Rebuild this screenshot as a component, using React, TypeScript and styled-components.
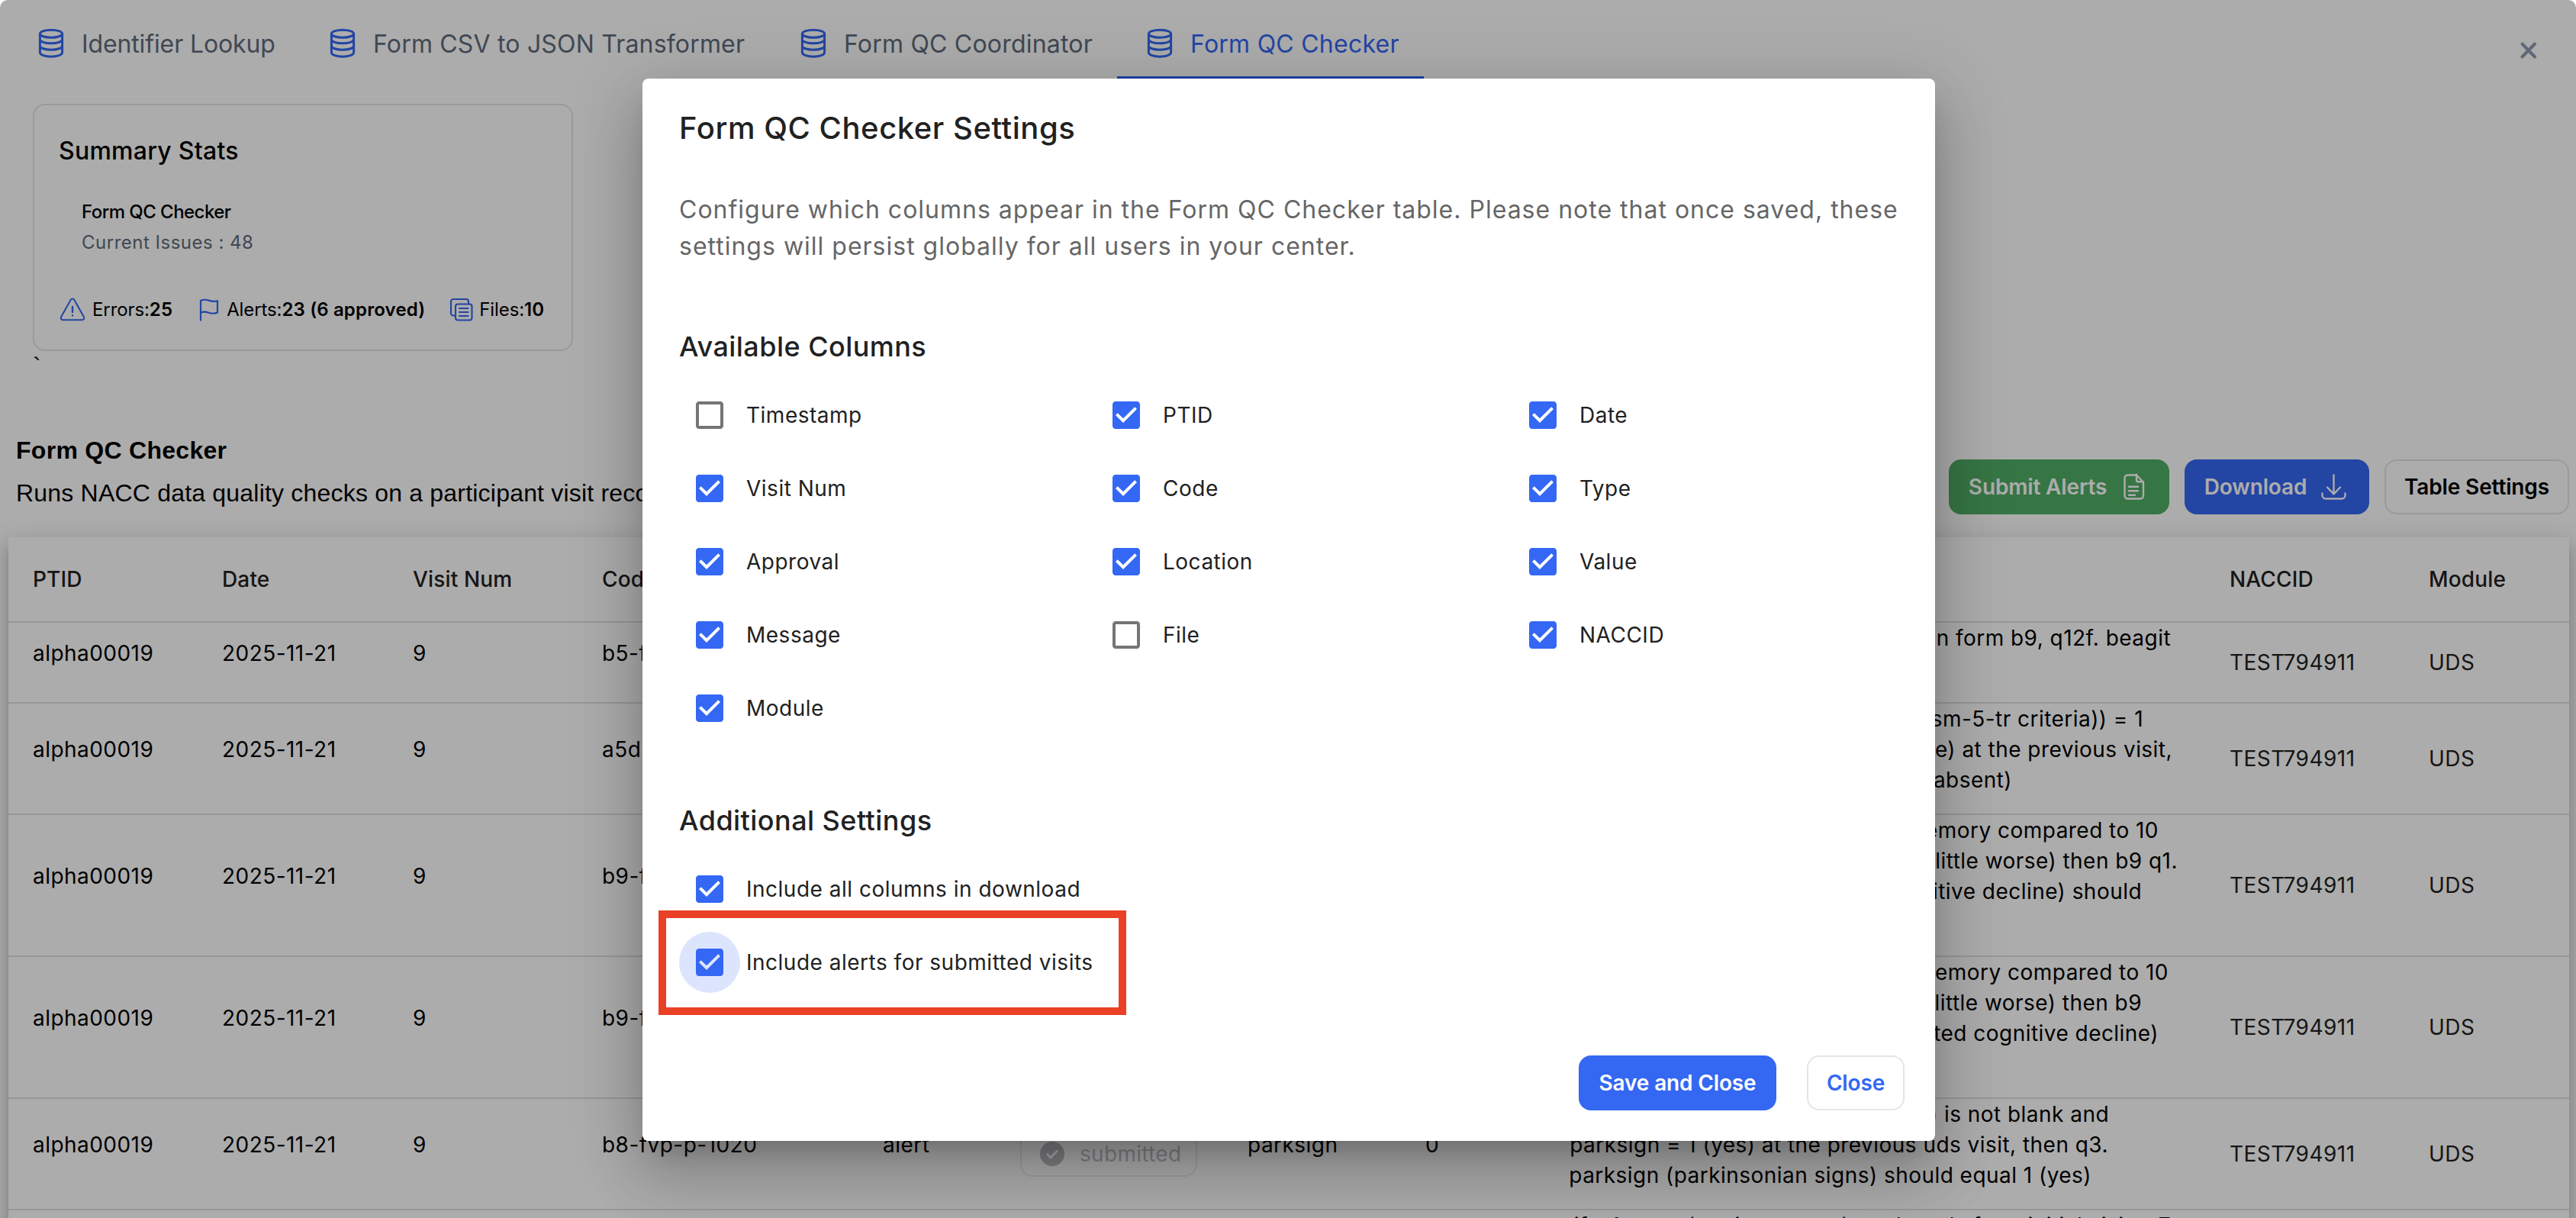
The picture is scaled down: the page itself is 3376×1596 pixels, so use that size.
import React from "react";
import styled, { createGlobalStyle } from "styled-components";

const GlobalStyle = createGlobalStyle`
  * { box-sizing: border-box; }
  body {
    margin: 0;
    background: #fff;
    font-family: Inter, "Liberation Sans", sans-serif;
    color: #000;
  }
`;

const Page = styled.div`
  position: relative;
  width: 3376px;
  height: 1596px;
  overflow: hidden;
  background: #fff;
`;

const TabBar = styled.nav`
  display: flex;
  height: 104px;
  padding-left: 11px;
`;

const Tab = styled.div<{ $width: number; $spacing: number; $active?: boolean }>`
  display: flex;
  align-items: center;
  gap: 16px;
  width: ${(p) => p.$width}px;
  padding: 14px 0 0 32px;
  border-bottom: 4px solid ${(p) => (p.$active ? "#2f62f2" : "transparent")};
  color: ${(p) => (p.$active ? "#3467f4" : "#5f6b7b")};
  font-size: 32px;
  letter-spacing: ${(p) => p.$spacing}px;
  white-space: nowrap;
`;

const CloseMark = styled.div`
  margin: 42px 38px 0 auto;
  height: 48px;
`;

const Summary = styled.section`
  padding: 32px 0 0 43px;
  height: 462px;
`;

const Card = styled.div`
  width: 708px;
  height: 324px;
  padding: 36px 32px 0;
  border: 2px solid #e4e4e9;
  border-radius: 16px;
`;

const CardTitle = styled.h3`
  margin: 0 0 36px;
  font-size: 32px;
  line-height: 48px;
  font-weight: 500;
  letter-spacing: 0.25px;
`;

const CardLine = styled.p<{ $muted?: boolean }>`
  margin: 0 0 0 30px;
  font-size: 24px;
  line-height: 40px;
  font-weight: ${(p) => (p.$muted ? 400 : 500)};
  letter-spacing: ${(p) => (p.$muted ? "0.5px" : "-0.55px")};
  color: ${(p) => (p.$muted ? "#5f6b7b" : "#000")};
`;

const StatRow = styled.div`
  display: flex;
  gap: 31px;
  margin-top: 51px;
`;

const Stat = styled.div`
  display: flex;
  align-items: center;
  height: 32px;
  gap: 8px;
  font-size: 24px;
  font-weight: 400;
  letter-spacing: -0.1px;
  white-space: nowrap;
  svg { flex: none; }
  b { font-weight: 600; letter-spacing: 0.15px; }
`;

const Stray = styled.div`
  height: 40px;
  margin-top: -4px;
  font: 32px/48px "Liberation Sans", sans-serif;
`;

const SectionHead = styled.header`
  display: flex;
  justify-content: space-between;
  align-items: flex-end;
  height: 108px;
  padding: 0 9px 0 21px;
`;

const Intro = styled.div`
  font: 32px/48px "Liberation Sans", Arial, sans-serif;
  letter-spacing: 0.2px;
  h2 {
    margin: 0 0 8px;
    font-size: 32px;
    line-height: 48px;
    font-weight: 700;
    letter-spacing: 0.28px;
  }
  p { margin: 0 0 4px; }
`;

const Actions = styled.div`
  display: flex;
  gap: 20px;
`;

const Button = styled.button<{ $tone: "green" | "blue" | "plain" | "link"; $width: number }>`
  display: flex;
  align-items: center;
  justify-content: center;
  gap: 16px;
  width: ${(p) => p.$width}px;
  height: 72px;
  padding: 0;
  border-radius: 16px;
  border: ${(p) => (p.$tone === "plain" || p.$tone === "link" ? "2px solid #e4e4ea" : "0")};
  background: ${(p) => (p.$tone === "green" ? "#50ae66" : p.$tone === "blue" ? "#3467f2" : "transparent")};
  color: ${(p) => (p.$tone === "plain" ? "#000" : p.$tone === "link" ? "#3467f2" : "#fff")};
  font: 600 28px/40px Inter, sans-serif;
  letter-spacing: -0.15px;
  white-space: nowrap;
`;

const Table = styled.div`
  margin: 30px 9px 0 11px;
  height: 1000px;
  background: #fff;
  box-shadow: 0 10px 10px -6px rgba(0, 0, 0, 0.2), 0 16px 20px 2px rgba(0, 0, 0, 0.14),
    0 6px 28px 4px rgba(0, 0, 0, 0.12);
`;

const Row = styled.div<{ $height: number; $head?: boolean }>`
  display: grid;
  grid-template-columns: 248px 250px 248px 368px 180px 298px 233px 189px 865px 261px 1fr;
  height: ${(p) => p.$height}px;
  padding-left: 32px;
  border-bottom: 2px solid #e0e0e0;
  align-items: center;
  font-size: 28px;
  line-height: 40px;
  font-weight: ${(p) => (p.$head ? 500 : 400)};
  color: ${(p) => (p.$head ? "#212121" : "#000")};
  letter-spacing: ${(p) => (p.$head ? 0.15 : 0.46)}px;
  white-space: nowrap;
`;

const Cell = styled.div`
  padding-bottom: 24px;
`;

const PlainCell = styled.div`
  color: #212121;
`;

const Message = styled.div`
  align-self: start;
  grid-column: 9;
`;

const Line = styled.div<{ $width: number }>`
  display: flex;
  justify-content: flex-end;
  width: ${(p) => p.$width}px;
  height: 40px;
`;

const Chip = styled.div`
  display: flex;
  align-items: center;
  gap: 20px;
  width: 232px;
  height: 60px;
  padding-left: 24px;
  border: 2px solid #ececf0;
  border-radius: 16px;
  color: #c0c0c6;
  letter-spacing: 0.3px;
`;

const Overlay = styled.div`
  position: absolute;
  inset: 0;
  display: flex;
  justify-content: center;
  align-items: flex-start;
  padding: 103px 0 0 2px;
  border-radius: 10px 10px 0 0;
  background: rgba(0, 0, 0, 0.325);
`;

const Dialog = styled.div`
  width: 1694px;
  height: 1392px;
  padding: 33px 40px 40px 48px;
  border-radius: 8px;
  background: #fff;
  color: #212121;
  box-shadow: 0 22px 30px -14px rgba(0, 0, 0, 0.2), 0 48px 76px 6px rgba(0, 0, 0, 0.14),
    0 18px 92px 16px rgba(0, 0, 0, 0.12);
`;

const DialogTitle = styled.h2`
  margin: 0 0 51px;
  font-size: 40px;
  line-height: 64px;
  font-weight: 500;
  letter-spacing: 0.55px;
`;

const DialogText = styled.p`
  margin: 0;
  font-size: 32px;
  line-height: 48px;
  letter-spacing: 1px;
  color: #666;
  white-space: nowrap;
`;

const GroupTitle = styled.h3<{ $top: number }>`
  margin: ${(p) => p.$top}px 0 22px;
  font-size: 36px;
  line-height: 56px;
  font-weight: 500;
  letter-spacing: 0.45px;
`;

const Options = styled.div<{ $columns: number }>`
  display: grid;
  grid-template-columns: repeat(${(p) => p.$columns}, 546px);
  row-gap: 16px;
`;

const Option = styled.label`
  position: relative;
  display: flex;
  align-items: center;
  gap: 8px;
  height: 80px;
  font-size: 28px;
  letter-spacing: 0.5px;
  white-space: nowrap;
`;

const BoxHalo = styled.span<{ $on?: boolean }>`
  display: flex;
  padding: 16px;
  border-radius: 50%;
  background: ${(p) => (p.$on ? "#dde5fe" : "transparent")};
`;

const Highlight = styled.span`
  position: absolute;
  left: -27px;
  top: -28px;
  width: 613px;
  height: 137px;
  border: 10px solid #ea4025;
`;

const Footer = styled.div`
  display: flex;
  justify-content: flex-end;
  gap: 40px;
  margin-top: 82px;
`;

const DatabaseIcon = () => (
  <svg width="48" height="48" viewBox="0 0 24 24" fill="none" stroke="#3467f2" strokeWidth="1.5">
    <ellipse cx="12" cy="5.6" rx="7.3" ry="2.5" />
    <path d="M4.7 5.6V17.9c0 1.5 3.2 2.7 7.3 2.7s7.3-1.2 7.3-2.7V5.6" />
    <path d="M4.7 9.4c0 1.4 3.2 2.5 7.3 2.5s7.3-1.1 7.3-2.5M4.7 13.6c0 1.4 3.2 2.5 7.3 2.5s7.3-1.1 7.3-2.5" />
  </svg>
);

const WarningIcon = () => (
  <svg width="36" height="32" viewBox="0 0 36 32" fill="none" stroke="#3467f2" strokeWidth="2" strokeLinecap="round">
    <path d="M15.6 3.9 3.1 26.2c-1 1.9.2 4 2.3 4h25.2c2.1 0 3.3-2.1 2.3-4L20.4 3.9c-1.1-1.9-3.7-1.9-4.8 0Z" />
    <path d="M18 13v7M18 24.2v.2" strokeWidth="2.4" />
  </svg>
);

const FlagIcon = () => (
  <svg width="32" height="32" viewBox="0 0 32 32" fill="none" stroke="#3467f2" strokeWidth="2.2" strokeLinejoin="round">
    <path d="M6 31.500V5c3.400-1.600 6.600-1.700 10.500-.4 4 1.500 7.500 1.800 11.500.6V20.500c-4 1.900-7.500 1.600-11.500.2-3.900-1.400-7.100-1.400-10.500 0" />
  </svg>
);

const FilesIcon = () => (
  <svg width="32" height="32" viewBox="0 0 32 32" fill="none" stroke="#3467f2" strokeWidth="2.1" strokeLinecap="round">
    <rect x="9" y="9.500" width="21.500" height="21" rx="3" />
    <path d="M8.500 24.500H6a3 3 0 0 1-3-3V6a3 3 0 0 1 3-3h17a3 3 0 0 1 3 3v3" />
    <path d="M14 15h11.500M14 20h11.500M14 25h11.500" />
  </svg>
);

const DocumentIcon = () => (
  <svg width="40" height="40" viewBox="0 0 40 40" fill="none" stroke="#fff" strokeWidth="2.4" strokeLinecap="round" strokeLinejoin="round">
    <path d="M11.500 4.500H23l9 9.500v17.500a4 4 0 0 1-4 4H11.500a4 4 0 0 1-4-4v-23a4 4 0 0 1 4-4Z" />
    <path d="M23 4.500V12a2 2 0 0 0 2 2h7M13 20.500h12M13 26h12M13 31.500h8" transform="translate(0 -.8)" />
  </svg>
);

const DownloadIcon = () => (
  <svg width="40" height="40" viewBox="0 0 40 40" fill="none" stroke="#fff" strokeWidth="2.400" strokeLinecap="round" strokeLinejoin="round">
    <path d="M19.500 4.500V29M11 20.500l8.500 8.800L28 20.500M4.500 28.500V31a4.500 4.500 0 0 0 4.500 4.500h21a4.500 4.500 0 0 0 4.500-4.500v-2.500" />
  </svg>
);

const CloseIcon = () => (
  <svg width="48" height="48" viewBox="0 0 48 48" stroke="#8c9bb0" strokeWidth="4" strokeLinecap="round">
    <path d="m15.500 15.500 16.500 17M32 15.500l-16.500 17" />
  </svg>
);

const CheckboxIcon = ({ checked }: { checked: boolean }) => (
  <svg width="48" height="48" viewBox="0 0 24 24">
    {checked ? (
      <path
        fill="#3467f4"
        d="M19 3H5c-1.110 0-2 .9-2 2v14c0 1.100.89 2 2 2h14c1.110 0 2-.9 2-2V5c0-1.100-.89-2-2-2zm-9 14l-5-5 1.410-1.410L10 14.170l7.590-7.590L19 8l-9 9z"
      />
    ) : (
      <path
        fill="#757575"
        d="M19 5v14H5V5h14m0-2H5c-1.100 0-2 .9-2 2v14c0 1.100.9 2 2 2h14c1.100 0 2-.9 2-2V5c0-1.100-.9-2-2-2z"
      />
    )}
  </svg>
);

const SubmittedIcon = () => (
  <svg width="32" height="32" viewBox="0 0 32 32">
    <circle cx="16" cy="16" r="16" fill="#bdbdc2" />
    <path d="m9.500 16.500 4.500 4.500 8.500-9" fill="none" stroke="#fff" strokeWidth="2.600" strokeLinecap="round" strokeLinejoin="round" />
  </svg>
);

const tabs = [
  { label: "Identifier Lookup", width: 382, spacing: -0.12 },
  { label: "Form CSV to JSON Transformer", width: 617, spacing: 0.18 },
  { label: "Form QC Coordinator", width: 454, spacing: 0.2 },
  { label: "Form QC Checker", width: 402, spacing: 0.25, active: true },
];

type Visit = { height: number; code: string; location: string; lines: [string, number][] };

const visits: Visit[] = [
  {
    height: 106,
    code: "b5-fvp-p-1012",
    location: "beagit",
    lines: [
      ["if present, it should be reported in form b9, q12f. beagit", 788],
      ["should equal 1 (yes)", 280],
    ],
  },
  {
    height: 146,
    code: "a5d2-fvp-p-1008",
    location: "ptsd",
    lines: [
      ["if ptsd (stress disorder (dsm-5-tr criteria)) = 1", 752],
      ["(present) or 2 (remote/inactive) at the previous visit,", 790],
      ["then q6b. should not equal 0 (absent)", 580],
    ],
  },
  {
    height: 186,
    code: "b9-fvp-p-1001",
    location: "decsub",
    lines: [
      ["if participant reports a decline in memory compared to 10", 772],
      ["years ago and it is 1 (yes, a little worse) then b9 q1.", 797],
      ["decsub (self-reported cognitive decline) should", 750],
      ["equal 1 (yes)", 180],
    ],
  },
  {
    height: 186,
    code: "b9-fvp-p-1002",
    location: "decin",
    lines: [
      ["if informant reports decline in memory compared to 10", 785],
      ["years ago and it is 1 (yes, a little worse) then b9", 750],
      ["q2. decin (informant reported cognitive decline)", 772],
      ["should equal 1 (yes)", 280],
    ],
  },
  {
    height: 146,
    code: "b8-fvp-p-1020",
    location: "parksign",
    lines: [
      ["if q3. parksign (parkinsonian signs) is not blank and", 707],
      ["parksign = 1 (yes) at the previous uds visit, then q3.", 706],
      ["parksign (parkinsonian signs) should equal 1 (yes)", 684],
    ],
  },
];

const nextMessage = "if q4. restt (resting tremor) on the uds form initial visit = 7";

const columns: [string, boolean][] = [
  ["Timestamp", false],
  ["PTID", true],
  ["Date", true],
  ["Visit Num", true],
  ["Code", true],
  ["Type", true],
  ["Approval", true],
  ["Location", true],
  ["Value", true],
  ["Message", true],
  ["File", false],
  ["NACCID", true],
  ["Module", true],
];

const headers = ["PTID", "Date", "Visit Num", "Code", "Type", "Approval", "Location", "Value", "Message", "NACCID", "Module"];

export default function App() {
  return (
    <Page>
      <GlobalStyle />
      <TabBar>
        {tabs.map((t) => (
          <Tab key={t.label} $width={t.width} $spacing={t.spacing} $active={t.active}>
            <DatabaseIcon />
            {t.label}
          </Tab>
        ))}
        <CloseMark>
          <CloseIcon />
        </CloseMark>
      </TabBar>

      <Summary>
        <Card>
          <CardTitle>Summary Stats</CardTitle>
          <CardLine>Form QC Checker</CardLine>
          <CardLine $muted>Current Issues : 48</CardLine>
          <StatRow>
            <Stat>
              <WarningIcon />
              <span>Errors:<b>25</b></span>
            </Stat>
            <Stat>
              <FlagIcon />
              <span>Alerts:<b>23 (6 approved)</b></span>
            </Stat>
            <Stat>
              <FilesIcon />
              <span>Files:<b>10</b></span>
            </Stat>
          </StatRow>
        </Card>
        <Stray>`</Stray>
      </Summary>

      <SectionHead>
        <Intro>
          <h2>Form QC Checker</h2>
          <p>Runs NACC data quality checks on a participant visit record.</p>
        </Intro>
        <Actions>
          <Button $tone="green" $width={289}>
            Submit Alerts
            <DocumentIcon />
          </Button>
          <Button $tone="blue" $width={242}>
            Download
            <DownloadIcon />
          </Button>
          <Button $tone="plain" $width={242}>Table Settings</Button>
        </Actions>
      </SectionHead>

      <Table>
        <Row $height={112} $head>
          {headers.map((h) => (
            <div key={h}>{h}</div>
          ))}
        </Row>
        {visits.map((v) => (
          <Row key={v.code} $height={v.height}>
            <Cell>alpha00019</Cell>
            <Cell>2025-11-21</Cell>
            <Cell>9</Cell>
            <Cell>{v.code}</Cell>
            <Cell>alert</Cell>
            <Chip>
              <SubmittedIcon />
              submitted
            </Chip>
            <Cell>{v.location}</Cell>
            <Cell>0</Cell>
            <Message>
              {v.lines.map(([text, width]) => (
                <Line key={text} $width={width}>{text}</Line>
              ))}
            </Message>
            <PlainCell>TEST794911</PlainCell>
            <PlainCell>UDS</PlainCell>
          </Row>
        ))}
        <Row $height={146}>
          <Message>
            <Line $width={788}>{nextMessage}</Line>
          </Message>
        </Row>
      </Table>

      <Overlay>
        <Dialog>
          <DialogTitle>Form QC Checker Settings</DialogTitle>
          <DialogText>
            Configure which columns appear in the Form QC Checker table. Please note that once saved, these
            <br />
            settings will persist globally for all users in your center.
          </DialogText>
          <GroupTitle $top={79}>Available Columns</GroupTitle>
          <Options $columns={3}>
            {columns.map(([label, checked]) => (
              <Option key={label}>
                <BoxHalo>
                  <CheckboxIcon checked={checked} />
                </BoxHalo>
                {label}
              </Option>
            ))}
          </Options>
          <GroupTitle $top={79}>Additional Settings</GroupTitle>
          <Options $columns={1}>
            <Option>
              <BoxHalo>
                <CheckboxIcon checked />
              </BoxHalo>
              Include all columns in download
            </Option>
            <Option>
              <BoxHalo $on>
                <CheckboxIcon checked />
              </BoxHalo>
              Include alerts for submitted visits
              <Highlight />
            </Option>
          </Options>
          <Footer>
            <Button $tone="blue" $width={259}>Save and Close</Button>
            <Button $tone="link" $width={128}>Close</Button>
          </Footer>
        </Dialog>
      </Overlay>
    </Page>
  );
}
